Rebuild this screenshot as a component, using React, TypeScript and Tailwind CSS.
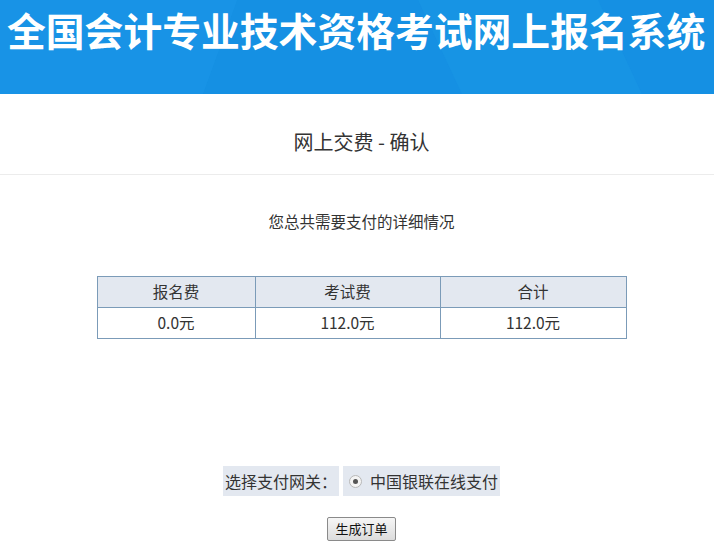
const fees = [
  { label: '报名费', amount: '0.0元', width: 'w-[158px]' },
  { label: '考试费', amount: '112.0元', width: 'w-[185px]' },
  { label: '合计', amount: '112.0元', width: '' },
];

const cjk = "font-['Noto_Sans_CJK_SC',sans-serif]";

export default function App() {
  return (
    <div className={`min-h-[547px] bg-white text-[#333] ${cjk}`}>
      {/* banner */}
      <div className="relative h-[94px] overflow-hidden bg-[#1590e3]">
        <div className="absolute -left-10 top-0 h-[94px] w-[260px] -skew-x-[20deg] bg-[#1a96e8]/60" />
        <div className="absolute left-[440px] top-0 h-[94px] w-[180px] skew-x-[25deg] bg-[#1a97e6]/50" />
        <h1 className="relative whitespace-nowrap pl-[7px] pt-[6px] text-[38.8px] font-bold leading-[46px] text-white">
          全国会计专业技术资格考试网上报名系统
        </h1>
      </div>

      <div className="border-b border-[#ececec] pb-[17px] pl-[9px] pt-[33px] text-center text-[20px] leading-[30px] text-[#333]">
        网上交费 - 确认
      </div>

      <div className="pl-[9px]">
        <p className="mt-[34px] text-center text-[15.5px] leading-[24px] text-[#333]">
          您总共需要支付的详细情况
        </p>

        <div className="mt-[43px] flex justify-center">
          <table className="w-[530px] border-collapse text-[15.5px] text-[#333]">
            <thead>
              <tr className="bg-[#e3e8f0]">
                {fees.map((f) => (
                  <th
                    key={f.label}
                    className={`${f.width} h-[31px] border border-[#7b9bb8] p-0 text-center font-normal`}
                  >
                    {f.label}
                  </th>
                ))}
              </tr>
            </thead>
            <tbody>
              <tr>
                {fees.map((f) => (
                  <td key={f.label} className="h-[31px] border border-[#7b9bb8] p-0 text-center">
                    {f.amount}
                  </td>
                ))}
              </tr>
            </tbody>
          </table>
        </div>

        {/* gateway choice */}
        <div className="mt-[127px] flex justify-center gap-[4px] text-[16px] leading-[30px] text-[#333]">
          <div className="bg-[#e3e8f0] px-[2px]">选择支付网关：</div>
          <label className="flex items-center gap-[8px] bg-[#e3e8f0] pl-[6px] pr-[2px]">
            <span className="flex h-[13px] w-[13px] items-center justify-center rounded-full border border-[#b8b8b8] bg-[#f4f4f4]">
              <span className="h-[5px] w-[5px] rounded-full bg-[#555]" />
            </span>
            中国银联在线支付
          </label>
        </div>

        <div className="mt-[21px] flex justify-center">
          <button className="h-[24px] rounded-[2px] border border-[#8a8a8a] bg-gradient-to-b from-[#f6f6f6] to-[#dcdcdc] px-[7px] text-[13px] leading-[20px] text-[#111]">
            生成订单
          </button>
        </div>
      </div>
    </div>
  );
}
